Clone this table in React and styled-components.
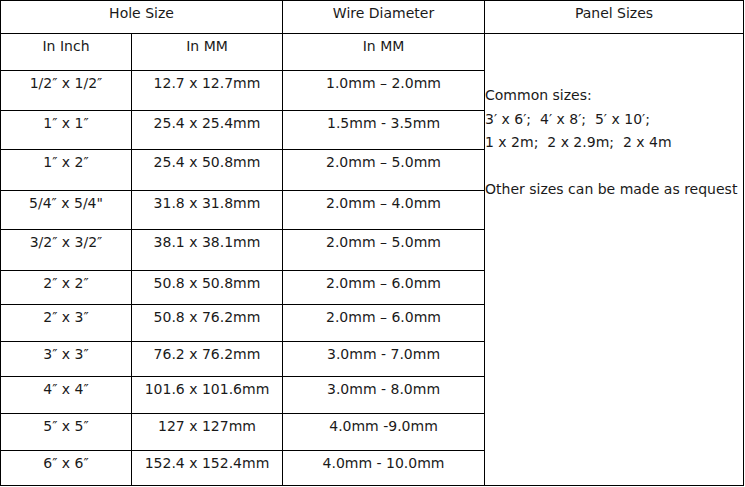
import React from 'react';
import styled, { createGlobalStyle } from 'styled-components';

const GlobalStyle = createGlobalStyle`
  html, body {
    margin: 0;
    padding: 0;
    background: #ffffff;
  }
`;

const Table = styled.table`
  border-collapse: collapse;
  width: 743px;
  table-layout: fixed;
  font-family: 'DejaVu Sans', Verdana, sans-serif;
  font-size: 14px;
  color: #1a1a1a;
`;

const Row = styled.tr`
  height: ${(props) => props.h}px;
`;

const Cell = styled.td`
  border: 1px solid #000;
  padding: 4px 2px 0 2px;
  vertical-align: top;
  text-align: center;
  line-height: 17px;
  white-space: nowrap;
`;

const PanelCell = styled.td`
  border: 1px solid #000;
  padding: 50px 0 0 0;
  vertical-align: top;
  text-align: left;
  font-size: 14px;
  line-height: 23.5px;
  white-space: nowrap;
`;

const PanelLine = styled.div`
  height: 23.5px;
`;

const rows = [
  { h: 40, inch: '1/2″ x 1/2″', mm: '12.7 x 12.7mm', wire: '1.0mm – 2.0mm' },
  { h: 39, inch: '1″ x 1″', mm: '25.4 x 25.4mm', wire: '1.5mm - 3.5mm' },
  { h: 41, inch: '1″ x 2″', mm: '25.4 x 50.8mm', wire: '2.0mm – 5.0mm' },
  { h: 39, inch: '5/4″ x 5/4"', mm: '31.8 x 31.8mm', wire: '2.0mm – 4.0mm' },
  { h: 41, inch: '3/2″ x 3/2″', mm: '38.1 x 38.1mm', wire: '2.0mm – 5.0mm' },
  { h: 34, inch: '2″ x 2″', mm: '50.8 x 50.8mm', wire: '2.0mm – 6.0mm' },
  { h: 37, inch: '2″ x 3″', mm: '50.8 x 76.2mm', wire: '2.0mm – 6.0mm' },
  { h: 35, inch: '3″ x 3″', mm: '76.2 x 76.2mm', wire: '3.0mm - 7.0mm' },
  { h: 37, inch: '4″ x 4″', mm: '101.6 x 101.6mm', wire: '3.0mm - 8.0mm' },
  { h: 37, inch: '5″ x 5″', mm: '127 x 127mm', wire: '4.0mm -9.0mm' },
  { h: 35, inch: '6″ x 6″', mm: '152.4 x 152.4mm', wire: '4.0mm - 10.0mm' },
];

export default function App() {
  return (
    <>
      <GlobalStyle />
      <Table>
        <colgroup>
          <col style={{ width: 131 }} />
          <col style={{ width: 151 }} />
          <col style={{ width: 202 }} />
          <col style={{ width: 259 }} />
        </colgroup>
        <tbody>
          <Row h={33}>
            <Cell colSpan={2}>Hole Size</Cell>
            <Cell>Wire Diameter</Cell>
            <Cell>Panel Sizes</Cell>
          </Row>
          <Row h={37}>
            <Cell>In Inch</Cell>
            <Cell>In MM</Cell>
            <Cell>In MM</Cell>
            <PanelCell rowSpan={12}>
              <PanelLine>Common sizes:</PanelLine>
              <PanelLine>3′ x 6′;&nbsp; 4′ x 8′;&nbsp; 5′ x 10′;</PanelLine>
              <PanelLine>1 x 2m;&nbsp; 2 x 2.9m;&nbsp; 2 x 4m</PanelLine>
              <PanelLine />
              <PanelLine>Other sizes can be made as request</PanelLine>
            </PanelCell>
          </Row>
          {rows.map((r) => (
            <Row h={r.h} key={r.inch + r.mm}>
              <Cell>{r.inch}</Cell>
              <Cell>{r.mm}</Cell>
              <Cell>{r.wire}</Cell>
            </Row>
          ))}
        </tbody>
      </Table>
    </>
  );
}
